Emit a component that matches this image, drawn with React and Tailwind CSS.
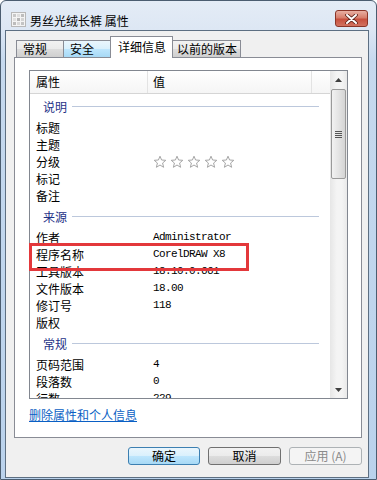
import React from "react";

function Star() {
  return (
    <svg width="14" height="14" viewBox="0 0 14 14">
      <path
        d="M7 1.2 L8.6 5 L12.8 5.3 L9.6 8 L10.6 12.3 L7 10 L3.4 12.3 L4.4 8 L1.2 5.3 L5.4 5 Z"
        fill="#ffffff"
        stroke="#a6a6a6"
        strokeWidth="1"
        strokeLinejoin="round"
      />
    </svg>
  );
}

function Row({ label, value, children }) {
  return (
    <div className="flex h-[17px] shrink-0 items-center text-[12px] leading-[17px] text-black">
      <div className="w-[118px] shrink-0 pl-[6px]">{label}</div>
      <div className="flex items-center pl-[5px] font-['Liberation_Mono',monospace] text-[11px] tracking-[-0.6px]">
        {value}
        {children}
      </div>
    </div>
  );
}

function Group({ title }) {
  return (
    <div className="flex h-[25px] shrink-0 items-center pl-[13px] pr-[11px]">
      <span className="text-[12px] leading-[14px] text-[#1e3287]">{title}</span>
      <div className="ml-[5px] h-px flex-1 bg-[#bcc8dc]" />
    </div>
  );
}

function ScrollBar() {
  return (
    <div className="flex h-full w-[17px] shrink-0 flex-col bg-[linear-gradient(to_right,#e6e6e6,#f4f4f4_40%,#f4f4f4_70%,#e9e9e9)]">
      <div className="flex h-[17px] shrink-0 items-center justify-center">
        <svg width="7" height="4" viewBox="0 0 7 4">
          <path d="M0 4 L3.5 0 L7 4 Z" fill="#404040" />
        </svg>
      </div>
      <div className="ml-[1px] mt-[1px] flex h-[90px] w-[15px] shrink-0 items-center justify-center rounded-[2px] border border-[#9a9a9a] bg-[linear-gradient(to_right,#f2f2f2,#e4e4e4_50%,#d4d4d4)]">
        <div className="flex flex-col gap-[1px]">
          <div className="h-px w-[7px] bg-[#555]" />
          <div className="h-px w-[7px] bg-[#555]" />
          <div className="h-px w-[7px] bg-[#555]" />
          <div className="h-px w-[7px] bg-[#555]" />
        </div>
      </div>
      <div className="flex-1" />
      <div className="flex h-[17px] shrink-0 items-center justify-center">
        <svg width="7" height="4" viewBox="0 0 7 4">
          <path d="M0 0 L7 0 L3.5 4 Z" fill="#404040" />
        </svg>
      </div>
    </div>
  );
}

export default function App() {
  return (
    <div className="relative h-[480px] w-[377px] overflow-hidden bg-white font-['Noto_Sans_CJK_SC','Noto_Sans',sans-serif]">
      <div className="flex h-[480px] w-[377px] flex-col rounded-t-[6px] border border-[#4b5d70] bg-[linear-gradient(to_bottom,#e4ecf6_0px,#dde7f4_28px,#c6d9ee_60px,#bad2ec_100%)]">
        {/* Title bar */}
        <div className="flex h-[29px] shrink-0 items-start pl-[10px] pr-[8px]">
          <svg className="mt-[11px]" width="15" height="15" viewBox="0 0 15 15">
            <rect x="0.5" y="0.5" width="14" height="14" fill="#f4f4f4" stroke="#b8b8b8" />
            <rect x="2" y="2" width="3" height="3" fill="#c8c8c8" />
            <rect x="6" y="2" width="3" height="3" fill="#dedede" />
            <rect x="10" y="2" width="3" height="3" fill="#bdbdbd" />
            <rect x="2" y="6" width="3" height="3" fill="#e0e0e0" />
            <rect x="6" y="6" width="3" height="3" fill="#b5b5b5" />
            <rect x="10" y="6" width="3" height="3" fill="#d4d4d4" />
            <rect x="2" y="10" width="3" height="3" fill="#bcbcbc" />
            <rect x="6" y="10" width="3" height="3" fill="#d8d8d8" />
            <rect x="10" y="10" width="3" height="3" fill="#c4c4c4" />
          </svg>
          <div className="ml-[4px] mt-[12px] text-[12px] leading-[16px] text-black">男丝光绒长裤 属性</div>
          <div className="ml-auto mt-[9px] flex h-[17px] w-[33px] items-center justify-center rounded-[3px] border border-[#8a3528] bg-[linear-gradient(to_bottom,#e8b0a3,#d77e6c_45%,#c7503e_55%,#d27260)]">
            <svg width="13" height="10" viewBox="0 0 13 10">
              <path d="M2 1 L11 9 M11 1 L2 9" stroke="#5a1f16" strokeWidth="3.6" strokeLinecap="round" />
              <path d="M2 1 L11 9 M11 1 L2 9" stroke="#ffffff" strokeWidth="2" strokeLinecap="round" />
            </svg>
          </div>
        </div>

        {/* Client area */}
        <div className="ml-[4px] mr-[7px] flex h-[448px] shrink-0 flex-col border border-[#5d6f82] bg-[#f0f0f0] pt-[5px]">
          {/* Tabs */}
          <div className="relative z-10 flex h-[21px] shrink-0 items-end pl-[10px] text-[12px] text-black">
            <div className="h-[17px] w-[47px] border border-r-0 border-b-0 border-[#898c95] bg-[linear-gradient(to_bottom,#f2f2f2,#ebebeb_50%,#dddddd_50%,#cfcfcf)] pl-[6px] leading-[16px]">
              常规
            </div>
            <div className="h-[17px] w-[47px] border border-r-0 border-b-0 border-[#898c95] bg-[linear-gradient(to_bottom,#eaf6fd,#d9f0fc_50%,#bee6fd_50%,#a7d9f5)] pl-[6px] leading-[16px]">
              安全
            </div>
            <div className="-mb-px h-[22px] w-[63px] border border-b-0 border-[#898c95] bg-white pl-[7px] leading-[20px]">
              详细信息
            </div>
            <div className="h-[17px] w-[68px] border border-l-0 border-b-0 border-[#898c95] bg-[linear-gradient(to_bottom,#f2f2f2,#ebebeb_50%,#dddddd_50%,#cfcfcf)] pl-[4px] leading-[16px]">
              以前的版本
            </div>
          </div>

          {/* Tab page */}
          <div className="ml-[8px] mr-[6px] flex h-[381px] shrink-0 flex-col border border-[#898c95] bg-white">
            <div className="ml-[14px] mr-[13px] mt-[12px] flex h-[329px] shrink-0 border border-[#828790] bg-white">
              <div className="flex h-full flex-1 flex-col overflow-hidden">
                {/* Header */}
                <div className="flex h-[23px] shrink-0 border-b border-[#d5d5d5] bg-[linear-gradient(to_bottom,#ffffff,#f5f5f5)] text-[12px] leading-[22px] text-black">
                  <div className="w-[118px] border-r border-[#e3e3e3] pl-[6px]">属性</div>
                  <div className="w-[164px] border-r border-[#e3e3e3] pl-[5px]">值</div>
                  <div className="flex-1" />
                </div>
                <Group title="说明" />
                <Row label="标题" />
                <Row label="主题" />
                <Row label="分级">
                  <div className="flex gap-[3px]">
                    <Star />
                    <Star />
                    <Star />
                    <Star />
                    <Star />
                  </div>
                </Row>
                <Row label="标记" />
                <Row label="备注" />
                <Group title="来源" />
                <Row label="作者" value="Administrator" />
                <Row label="程序名称" value="CorelDRAW X8" />
                <Row label="工具版本" value="18.10.0.661" />
                <Row label="文件版本" value="18.00" />
                <Row label="修订号" value="118" />
                <Row label="版权" />
                <Group title="常规" />
                <Row label="页码范围" value="4" />
                <Row label="段落数" value="0" />
                <Row label="行数" value="229" />
              </div>
              <ScrollBar />
            </div>
            <div className="ml-[14px] mt-[8px] text-[12px] leading-[16px] text-[#0a5fc4] underline">
              删除属性和个人信息
            </div>
          </div>

          {/* Buttons */}
          <div className="mt-[9px] flex shrink-0 justify-end gap-[8px] pr-[6px] text-[12px]">
            <div className="flex h-[18px] w-[72px] items-center justify-center rounded-[3px] border border-[#3c7fb1] bg-[linear-gradient(to_bottom,#eaf6fd,#d9f0fc_50%,#bee6fd_50%,#a7d9f5)] text-black">
              确定
            </div>
            <div className="flex h-[18px] w-[73px] items-center justify-center rounded-[3px] border border-[#707070] bg-[linear-gradient(to_bottom,#f2f2f2,#ebebeb_50%,#dddddd_50%,#cfcfcf)] text-black">
              取消
            </div>
            <div className="flex h-[18px] w-[73px] items-center justify-center rounded-[3px] border border-[#adb2b5] bg-[#f4f4f4] text-[#8a8a8a]">
              应用 (A)
            </div>
          </div>
        </div>
      </div>

      {/* Red annotation box */}
      <div className="absolute left-[29px] top-[243px] h-[28px] w-[220px] border-[3px] border-[#e3383b]" />
    </div>
  );
}
